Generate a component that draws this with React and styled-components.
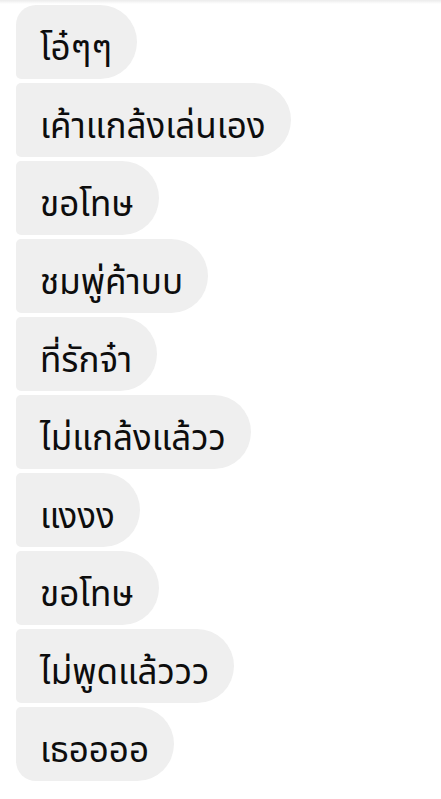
import React from "react";
import styled, { createGlobalStyle } from "styled-components";

const GlobalStyle = createGlobalStyle`
  body {
    margin: 0;
    background: #ffffff;
    font-family: "Noto Sans Thai", "Noto Sans", "DejaVu Sans", sans-serif;
  }
`;

const Wrapper = styled.div`
  position: relative;
  height: 799px;
  overflow: hidden;
  background: #ffffff;
  padding: 5px 16px 0;
  box-sizing: border-box;
  display: flex;
  flex-direction: column;
  align-items: flex-start;
  gap: 4px;

  &::before {
    content: "";
    position: absolute;
    left: 0;
    right: 0;
    top: 0;
    height: 4px;
    background: linear-gradient(rgba(0, 0, 0, 0.08), rgba(0, 0, 0, 0));
  }
`;

const Bubble = styled.div`
  height: 74px;
  box-sizing: border-box;
  padding: 14px 25px 0 24px;
  display: flex;
  align-items: center;
  background: #efefef;
  color: #0d0d0d;
  font-size: 35px;
  line-height: 1;
  white-space: nowrap;
  border-radius: ${({ $first, $last }) =>
    `${$first ? 20 : 5}px 37px 37px ${$last ? 20 : 5}px`};
`;

const messages = [
  "โอ๋ๆๆ",
  "เค้าแกล้งเล่นเอง",
  "ขอโทษ",
  "ชมพู่ค้าบบ",
  "ที่รักจ๋า",
  "ไม่แกล้งแล้วว",
  "แงงง",
  "ขอโทษ",
  "ไม่พูดแล้ววว",
  "เธออออ",
];

const App = () => (
  <Wrapper>
    <GlobalStyle />
    {messages.map((text, i) => (
      <Bubble key={i} $first={i === 0} $last={i === messages.length - 1}>
        {text}
      </Bubble>
    ))}
  </Wrapper>
);

export default App;
